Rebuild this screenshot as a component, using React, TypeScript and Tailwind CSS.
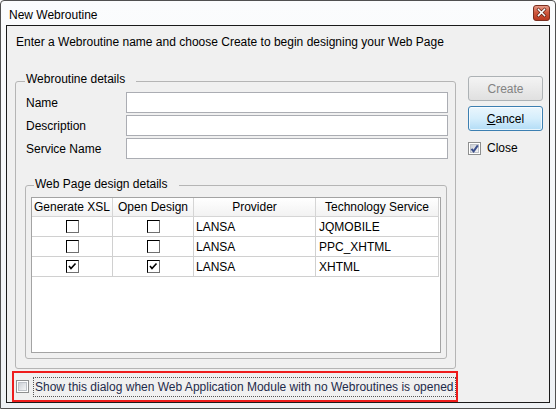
import type { ReactNode } from "react";

const headers = ["Generate XSL", "Open Design", "Provider", "Technology Service"];
const colWidths = ["w-[81px]", "w-[81px]", "w-[122px]", "w-[123px]"];

const rows = [
  { gen: false, open: false, provider: "LANSA", tech: "JQMOBILE" },
  { gen: false, open: false, provider: "LANSA", tech: "PPC_XHTML" },
  { gen: true, open: true, provider: "LANSA", tech: "XHTML" },
];

function CloseButton() {
  return (
    <svg width="17" height="16" viewBox="0 0 17 16" className="shrink-0">
      <defs>
        <linearGradient id="closeGrad" x1="0" y1="0" x2="0" y2="1">
          <stop offset="0" stopColor="#e9a18f" />
          <stop offset="0.45" stopColor="#d05a40" />
          <stop offset="1" stopColor="#b8351d" />
        </linearGradient>
      </defs>
      <rect x="0.5" y="0.5" width="16" height="15" rx="2.5" fill="url(#closeGrad)" stroke="#7a2f20" />
      <path d="M5.5 4.5 L11.5 10.5 M11.5 4.5 L5.5 10.5" stroke="#4a150b" strokeWidth="2.8" strokeLinecap="square" />
      <path d="M5.5 4.5 L11.5 10.5 M11.5 4.5 L5.5 10.5" stroke="#ffffff" strokeWidth="1.6" strokeLinecap="square" />
    </svg>
  );
}

function AeroCheck({ checked }: { checked: boolean }) {
  return (
    <span className="relative flex h-[13px] w-[13px] shrink-0 items-center justify-center border border-[#8e8f8f] bg-white">
      <span className="h-[9px] w-[9px] border border-[#bfc3c9] bg-linear-to-br from-[#cdd1d7] to-[#f5f5f5]" />
      {checked && (
        <svg className="absolute left-0 top-0" width="11" height="11" viewBox="0 0 11 11">
          <path d="M2.5 5.8 L4.6 8.4 L8.8 2.4" stroke="#3b4f8c" strokeWidth="2" fill="none" />
        </svg>
      )}
    </span>
  );
}

function GridCheck({ checked }: { checked: boolean }) {
  return (
    <span className="relative flex h-[13px] w-[13px] border border-t-[#000] border-l-[#000] border-r-[#707070] border-b-[#707070] bg-white">
      {checked && (
        <svg className="absolute left-0 top-0" width="11" height="11" viewBox="0 0 11 11">
          <path d="M2 5 L4 7.5 L8.5 2.5" stroke="#000" strokeWidth="1.6" fill="none" />
        </svg>
      )}
    </span>
  );
}

function GroupTitle({ children, className }: { children: ReactNode; className: string }) {
  return (
    <span className={`absolute bg-[#f0f0f0] pl-[1px] pr-[11px] leading-[16px] ${className}`}>
      {children}
    </span>
  );
}

function Field({ label }: { label: string }) {
  return (
    <div className="ml-[1px] flex h-[21px] items-center">
      <span className="w-[100px] leading-[16px]">{label}</span>
      <input className="h-[21px] w-[322px] border border-[#abadb3] bg-white px-[2px] text-[12px] outline-none" />
    </div>
  );
}

export default function App() {
  return (
    <div className="h-[409px] w-[556px] overflow-hidden rounded-t-[4px] border border-[#505050] bg-linear-to-b from-[#fbfcfd] to-[#eef1f4] px-[5px] pb-[5px] font-['Liberation_Sans',Arial,sans-serif] text-[12px] text-black">
      {/* Title bar */}
      <div className="flex h-[24px] items-start justify-between pt-[4px]">
        <span className="pl-[3px] pt-[2px] leading-[16px]">New Webroutine</span>
        <CloseButton />
      </div>

      {/* Client area */}
      <div className="flex h-[378px] w-[544px] flex-col border border-[#1a1a1a] bg-[#f0f0f0]">
        <p className="pl-[9px] pt-[8px] leading-[16px]">
          Enter a Webroutine name and choose Create to begin designing your Web Page
        </p>

        <div className="flex items-start pl-[8px]">
          {/* Webroutine details */}
          <div className="relative mt-[31px] h-[288px] w-[441px] rounded-[3px] border border-[#b5b5b5] pl-[9px] pt-[10px]">
            <GroupTitle className="left-[9px] top-[-11px]">Webroutine details</GroupTitle>
            <div className="flex flex-col gap-[2px]">
              <Field label="Name" />
              <Field label="Description" />
              <Field label="Service Name" />
            </div>

            {/* Web Page design details */}
            <div className="relative mt-[26px] h-[174px] w-[422px] rounded-[3px] border border-[#b5b5b5] pl-[5px] pt-[11px]">
              <GroupTitle className="left-[8px] top-[-10px]">Web Page design details</GroupTitle>
              <div className="h-[156px] w-[410px] border border-[#a3a3a3] bg-white">
                <div className="flex h-[19px] w-[407px] border-b border-[#d5d5d5] bg-linear-to-b from-white to-[#f2f2f2]">
                  {headers.map((h, i) => (
                    <div
                      key={h}
                      className={`${colWidths[i]} flex items-center justify-center border-r border-[#d5d5d5] leading-[16px]`}
                    >
                      {h}
                    </div>
                  ))}
                </div>
                {rows.map((row) => (
                  <div key={row.tech} className="flex h-[20px] w-[407px] border-b border-[#d0d0d0]">
                    <div className={`${colWidths[0]} flex items-center justify-center border-r border-[#d0d0d0]`}>
                      <GridCheck checked={row.gen} />
                    </div>
                    <div className={`${colWidths[1]} flex items-center justify-center border-r border-[#d0d0d0]`}>
                      <GridCheck checked={row.open} />
                    </div>
                    <div className={`${colWidths[2]} flex items-center border-r border-[#d0d0d0] pl-[2px] leading-[16px]`}>
                      {row.provider}
                    </div>
                    <div className={`${colWidths[3]} flex items-center border-r border-[#d0d0d0] pl-[3px] leading-[16px]`}>
                      {row.tech}
                    </div>
                  </div>
                ))}
              </div>
            </div>
          </div>

          {/* Buttons */}
          <div className="ml-[12px] mt-[26px] flex w-[75px] flex-col">
            <button
              disabled
              className="h-[25px] w-[75px] rounded-[3px] border border-[#adb2b5] bg-linear-to-b from-[#f4f4f4] to-[#e0e0e0] text-[12px] text-[#838383]"
            >
              Create
            </button>
            <button className="mt-[5px] h-[25px] w-[75px] rounded-[3px] border border-[#3c7fb1] bg-linear-to-b from-[#eaf6fd] via-[#d5eefc] to-[#b2dcf6] text-[12px] shadow-[inset_0_0_0_1px_rgba(255,255,255,0.7)]">
              <span className="underline">C</span>ancel
            </button>
            <label className="mt-[9px] flex items-center gap-[6px]">
              <AeroCheck checked />
              <span className="leading-[16px]">Close</span>
            </label>
          </div>
        </div>

        {/* Highlighted option */}
        <div className="ml-[5px] mt-[2px] flex h-[31px] w-[446px] items-center border-2 border-[#ee1c1c] pl-[2px]">
          <AeroCheck checked={false} />
          <span className="ml-[4px] flex h-[20px] flex-1 items-center border border-dotted border-[#555] pl-[1px] leading-[16px] text-[#1e2a4a]">
            Show this dialog when Web Application Module with no Webroutines is opened
          </span>
        </div>
      </div>
    </div>
  );
}
